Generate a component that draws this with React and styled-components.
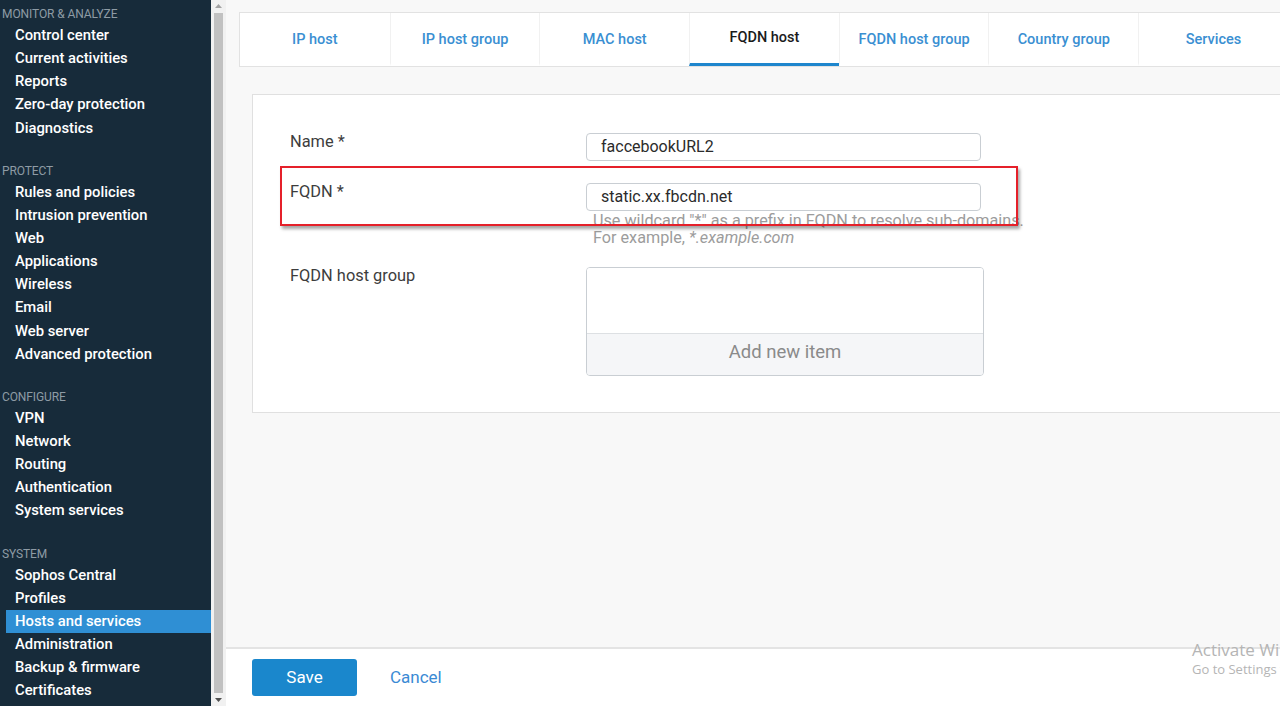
import styled, { createGlobalStyle } from "styled-components";

const GlobalStyle = createGlobalStyle`
  html, body {
    margin: 0;
    padding: 0;
    overflow: hidden;
  }
  body {
    font-family: Roboto, "Noto Sans", "Liberation Sans", sans-serif;
  }
`;

const Page = styled.div`
  display: flex;
  width: 1280px;
  height: 706px;
  overflow: hidden;
  position: relative;
`;

const Sidebar = styled.nav`
  width: 211px;
  flex: none;
  background: #172b3a;
  padding-top: 5px;
  box-sizing: border-box;
`;

const Section = styled.div`
  margin-bottom: 22px;
`;

const Heading = styled.div`
  padding-left: 2px;
  height: 19px;
  line-height: 19px;
  font-size: 12px;
  color: #8e9ba5;
  text-transform: uppercase;
  letter-spacing: -0.1px;
`;

const Item = styled.div`
  margin-left: 6px;
  padding-left: 9px;
  height: 23.15px;
  line-height: 23px;
  font-size: 14.8px;
  font-weight: 500;
  color: #ffffff;
  background: ${(p) => (p.$active ? "#2f8fd4" : "transparent")};
`;

const Scrollbar = styled.div`
  width: 15px;
  flex: none;
  background: #f1f1f1;
  display: flex;
  flex-direction: column;
  align-items: center;
`;

const Arrow = styled.div`
  height: 12px;
  display: flex;
  align-items: center;
  justify-content: center;
`;

const Thumb = styled.div`
  flex: 1;
  width: 9px;
  background: #c1c1c1;
  margin: 1px 0;
`;

const Main = styled.main`
  flex: 1;
  display: flex;
  flex-direction: column;
  min-width: 0;
`;

const Content = styled.div`
  flex: 1;
  background: #f8f8f8;
  padding: 12px 0 0 13px;
  overflow: hidden;
`;

const Tabs = styled.div`
  display: flex;
  height: 55px;
  background: #ffffff;
  border: 1px solid #e2e2e2;
  border-right: none;
  box-sizing: border-box;
`;

const Tab = styled.div`
  width: 149.7px;
  flex: none;
  display: flex;
  align-items: center;
  justify-content: center;
  font-size: 14.5px;
  font-weight: 500;
  color: ${(p) => (p.$active ? "#1b1b1b" : "#3a8fd2")};
  border-left: ${(p) => (p.$first ? "none" : "1px solid #f1f1f1")};
  box-sizing: border-box;
  padding-bottom: ${(p) => (p.$active ? "4px" : "0")};
  border-bottom: 3px solid ${(p) => (p.$active ? "#1e86cd" : "transparent")};
  padding-top: 3px;
`;

const Card = styled.section`
  margin: 27px 0 0 13px;
  height: 319px;
  background: #ffffff;
  border: 1px solid #e0e0e0;
  border-right: none;
  box-sizing: border-box;
  padding: 38px 0 0 37px;
`;

const Row = styled.div`
  position: relative;
  display: grid;
  grid-template-columns: 296px 396px;
  margin-bottom: ${(p) => p.$gap || "22px"};
`;

const Label = styled.div`
  font-size: 16.4px;
  color: #3d3d3d;
  line-height: 18px;
`;

const Input = styled.div`
  height: 28px;
  border: 1px solid #c9ced3;
  border-radius: 4px;
  box-sizing: border-box;
  padding-left: 14px;
  font-size: 16px;
  line-height: 26px;
  color: #2b2b2b;
  width: 395px;
`;

const Hint = styled.div`
  margin: 1px 0 0 7px;
  font-size: 16.2px;
  line-height: 17px;
  color: #9c9c9c;
  white-space: nowrap;
  em {
    font-style: italic;
  }
`;

const Highlight = styled.div`
  position: absolute;
  left: -10px;
  top: -17px;
  width: 738px;
  height: 60px;
  border: 2px solid #e5202a;
  box-sizing: border-box;
  box-shadow: 2px 3px 3px rgba(0, 0, 0, 0.35);
  pointer-events: none;
`;

const GroupBox = styled.div`
  width: 398px;
  height: 109px;
  border: 1px solid #c9ced3;
  border-radius: 4px;
  box-sizing: border-box;
  display: flex;
  flex-direction: column;
  overflow: hidden;
`;

const GroupList = styled.div`
  flex: 1;
  background: #ffffff;
  border-bottom: 1px solid #dde0e3;
`;

const AddItem = styled.div`
  height: 41px;
  background: #f5f6f8;
  display: flex;
  align-items: center;
  justify-content: center;
  font-size: 18.5px;
  color: #8a8a8a;
  padding-bottom: 6px;
  box-sizing: border-box;
`;

const Footer = styled.footer`
  height: 59px;
  flex: none;
  background: #ffffff;
  border-top: 2px solid #e4e4e4;
  box-sizing: border-box;
  display: flex;
  align-items: center;
  padding: 0 0 1px 26px;
  gap: 33px;
`;

const SaveButton = styled.button`
  width: 105px;
  height: 37px;
  border: none;
  border-radius: 3px;
  background: #1a87cc;
  color: #ffffff;
  font-family: inherit;
  font-size: 17px;
  padding: 0;
`;

const CancelLink = styled.span`
  font-size: 17px;
  color: #3a8ad4;
`;

const Watermark = styled.div`
  position: absolute;
  left: 1192px;
  top: 640px;
  font-family: "Open Sans", "Noto Sans", sans-serif;
  color: #b5b5b5;
  white-space: nowrap;
  pointer-events: none;
`;

const WatermarkTitle = styled.div`
  font-size: 17px;
  line-height: 20px;
`;

const WatermarkSub = styled.div`
  font-size: 13px;
  line-height: 18px;
`;

const nav = [
  {
    title: "Monitor & analyze",
    items: ["Control center", "Current activities", "Reports", "Zero-day protection", "Diagnostics"],
  },
  {
    title: "Protect",
    items: [
      "Rules and policies",
      "Intrusion prevention",
      "Web",
      "Applications",
      "Wireless",
      "Email",
      "Web server",
      "Advanced protection",
    ],
  },
  {
    title: "Configure",
    items: ["VPN", "Network", "Routing", "Authentication", "System services"],
  },
  {
    title: "System",
    items: [
      "Sophos Central",
      "Profiles",
      "Hosts and services",
      "Administration",
      "Backup & firmware",
      "Certificates",
    ],
  },
];

const tabs = [
  "IP host",
  "IP host group",
  "MAC host",
  "FQDN host",
  "FQDN host group",
  "Country group",
  "Services",
];

function App() {
  return (
    <Page>
      <GlobalStyle />
      <Sidebar>
        {nav.map((s) => (
          <Section key={s.title}>
            <Heading>{s.title}</Heading>
            {s.items.map((it) => (
              <Item key={it} $active={it === "Hosts and services"}>
                {it}
              </Item>
            ))}
          </Section>
        ))}
      </Sidebar>
      <Scrollbar>
        <Arrow>
          <svg width="7" height="4" viewBox="0 0 7 4">
            <path d="M0 4 L3.5 0 L7 4 Z" fill="#a3a3a3" />
          </svg>
        </Arrow>
        <Thumb />
        <Arrow>
          <svg width="7" height="4" viewBox="0 0 7 4">
            <path d="M0 0 L3.5 4 L7 0 Z" fill="#505050" />
          </svg>
        </Arrow>
      </Scrollbar>
      <Main>
        <Content>
          <Tabs>
            {tabs.map((t, i) => (
              <Tab key={t} $first={i === 0} $active={t === "FQDN host"}>
                {t}
              </Tab>
            ))}
          </Tabs>
          <Card>
            <Row>
              <Label>Name *</Label>
              <Input>faccebookURL2</Input>
            </Row>
            <Row $gap="21px">
              <Highlight />
              <Label>FQDN *</Label>
              <div>
                <Input>static.xx.fbcdn.net</Input>
                <Hint>
                  Use wildcard "*" as a prefix in FQDN to resolve sub-domains.
                  <br />
                  For example, <em>*.example.com</em>
                </Hint>
              </div>
            </Row>
            <Row>
              <Label>FQDN host group</Label>
              <GroupBox>
                <GroupList />
                <AddItem>Add new item</AddItem>
              </GroupBox>
            </Row>
          </Card>
        </Content>
        <Footer>
          <SaveButton>Save</SaveButton>
          <CancelLink>Cancel</CancelLink>
        </Footer>
      </Main>
      <Watermark>
        <WatermarkTitle>Activate Windows</WatermarkTitle>
        <WatermarkSub>Go to Settings to activate Windows.</WatermarkSub>
      </Watermark>
    </Page>
  );
}

export default App;
